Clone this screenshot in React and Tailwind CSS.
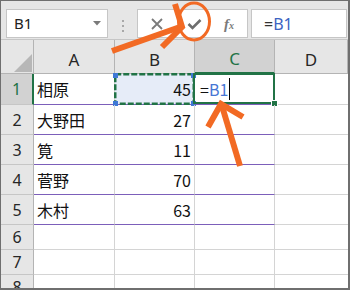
const rows = [
  { n: 1, a: "相原", b: "45", h: "h-[31px]" },
  { n: 2, a: "大野田", b: "27", h: "h-[30px]" },
  { n: 3, a: "筧", b: "11", h: "h-[30px]" },
  { n: 4, a: "菅野", b: "70", h: "h-[30px]" },
  { n: 5, a: "木村", b: "63", h: "h-[30px]" },
  { n: 6, h: "h-[25px]" },
  { n: 7, h: "h-[25px]" },
  { n: 8, h: "h-[25px]" },
];

function Toolbar() {
  return (
    <div className="h-[39px] bg-[#e6e6e6] border-b border-[#c6c6c6] flex items-start pt-[8px] pl-[5px] pr-px">
      <div className="w-[102px] h-[29px] bg-white border border-[#c6c6c6] flex items-center justify-between pl-[7px] pr-[6px]">
        <span className="font-['Noto_Sans',sans-serif] text-[15px] text-[#222] leading-none">B1</span>
        <svg width="8" height="5" viewBox="0 0 8 5">
          <polygon points="0,0 8,0 4,4.5" fill="#7a7a7a" />
        </svg>
      </div>
      <div className="ml-[14px] mt-[11px] flex flex-col gap-[3px]">
        <div className="w-[2px] h-[2px] bg-[#a8a8a8]" />
        <div className="w-[2px] h-[2px] bg-[#a8a8a8]" />
        <div className="w-[2px] h-[2px] bg-[#a8a8a8]" />
      </div>
      <div className="ml-[13px] w-[111px] h-[29px] bg-white border border-[#c6c6c6] flex items-center">
        <svg className="ml-[13px]" width="12" height="12" viewBox="0 0 12 12">
          <path d="M1 1 L11 11 M11 1 L1 11" stroke="#7a7a7a" strokeWidth="1.8" />
        </svg>
        <svg className="ml-[24px]" width="15" height="12" viewBox="0 0 15 12">
          <path d="M1.5 6 L5.5 10 L13.5 2" stroke="#6e6e6e" strokeWidth="2.6" fill="none" />
        </svg>
        <span className="ml-[22px] font-['Liberation_Serif',serif] italic text-[#7a7a7a] leading-none">
          <span className="text-[15px] font-bold">f</span>
          <span className="text-[10px] font-bold">x</span>
        </span>
      </div>
      <div className="ml-[3px] flex-1 h-[29px] bg-white border border-[#c6c6c6] flex items-center pl-[12px]">
        <span className="font-['Noto_Sans',sans-serif] text-[16px] leading-none">
          <span className="text-[#333]">=</span>
          <span className="text-[#3c63c2]">B1</span>
        </span>
      </div>
    </div>
  );
}

function HeaderRow() {
  const base =
    "h-[34px] bg-[#e6e6e6] border-r border-b border-[#b4b4b4] flex items-center justify-center pt-[6px] font-['Noto_Sans',sans-serif] text-[17px] text-[#262626]";
  return (
    <div className="grid grid-cols-[33px_81px_80px_80px_1fr]">
      <div className="h-[34px] bg-[#e6e6e6] border-r border-b border-[#b4b4b4] flex items-end justify-end pr-px pb-px">
        <svg width="18" height="18" viewBox="0 0 18 18">
          <polygon points="18,0 18,18 0,18" fill="#b7b7b7" />
        </svg>
      </div>
      <div className={base}>A</div>
      <div className={base}>B</div>
      <div className="h-[34px] bg-[#d2d2d2] border-r border-[#b4b4b4] border-b-2 border-b-[#217346] flex items-center justify-center pt-[5px] font-['Noto_Sans',sans-serif] text-[17px] text-[#217346]">
        C
      </div>
      <div className={base}>D</div>
    </div>
  );
}

function BodyRow({ r }) {
  const purple = r.n <= 5;
  const lineB = purple ? "border-b-[#7c5fba]" : "border-b-[#d4d4d4]";
  const cell = `relative border-r border-[#d4d4d4] border-b ${lineB}`;
  const isOne = r.n === 1;
  return (
    <div className={`grid grid-cols-[33px_81px_80px_80px_1fr] ${r.h}`}>
      <div
        className={
          isOne
            ? "bg-[#d2d2d2] border-b border-[#c6c6c6] border-r-2 border-r-[#217346] flex items-center justify-center font-['Noto_Sans',sans-serif] text-[16px] text-[#217346]"
            : "bg-[#e6e6e6] border-b border-[#c6c6c6] border-r border-r-[#b4b4b4] flex items-center justify-center font-['Noto_Sans',sans-serif] text-[16px] text-[#262626]"
        }
      >
        {r.n}
      </div>
      <div className={`${cell} flex items-center pl-[3px] font-['Noto_Sans_CJK_JP',sans-serif] text-[16px] text-[#111]`}>
        {r.a}
      </div>
      <div
        className={`${cell} ${isOne ? "bg-[#e6ecf8]" : ""} flex items-center justify-end pr-[3px] font-['Noto_Sans_CJK_JP',sans-serif] text-[16px] text-[#111]`}
      >
        {r.b}
        {isOne && (
          <>
            <svg className="absolute left-[-1px] top-[-1px]" width="81" height="32" viewBox="0 0 81 32">
              <rect x="1.25" y="1.25" width="78.5" height="29.5" fill="none" stroke="#217346" strokeWidth="2.5" strokeDasharray="6 2" />
            </svg>
            <div className="absolute left-[-2px] top-[-1px] w-[5px] h-[5px] bg-[#3f78d6]" />
            <div className="absolute left-[-2px] bottom-[-2px] w-[5px] h-[5px] bg-[#3f78d6]" />
            <div className="absolute right-[-2px] top-[-1px] w-[5px] h-[5px] bg-[#3f78d6]" />
            <div className="absolute right-[-2px] bottom-[-2px] w-[5px] h-[5px] bg-[#3f78d6]" />
          </>
        )}
      </div>
      <div className={`${cell} flex items-center pl-[5px] font-['Noto_Sans_CJK_JP',sans-serif] text-[16px]`}>
        {isOne && (
          <>
            <span className="text-[#111]">=</span>
            <span className="text-[#4676d4]">B1</span>
            <span className="ml-px w-px h-[22px] bg-black" />
            <div className="absolute left-[-2px] top-[-1px] right-[-1px] bottom-0 border-2 border-[#217346]" />
            <div className="absolute right-[-3px] bottom-[-2px] w-[5px] h-[5px] bg-[#217346] outline outline-1 outline-white" />
          </>
        )}
      </div>
      <div className="border-b border-[#d4d4d4]" />
    </div>
  );
}

export default function App() {
  return (
    <div className="relative w-[350px] h-[290px] overflow-hidden bg-white border-t border-l border-r-2 border-b-2 border-[#6f6f6f]">
      <Toolbar />
      <HeaderRow />
      {rows.map((r) => (
        <BodyRow key={r.n} r={r} />
      ))}
      <svg
        className="absolute left-[-1px] top-[-1px] pointer-events-none"
        width="350"
        height="290"
        viewBox="0 0 350 290"
      >
        <ellipse cx="194" cy="21.5" rx="15.5" ry="18.5" fill="none" stroke="#f26a24" strokeWidth="3" />
        <path d="M112 51 L180 27" stroke="#f26a24" strokeWidth="6" fill="none" />
        <path d="M175 4 L182 27 L162 47" stroke="#f26a24" strokeWidth="6" fill="none" strokeLinejoin="miter" />
        <path d="M240 166 L222 106" stroke="#f26a24" strokeWidth="6" fill="none" />
        <path d="M208 127 L221 104 L243 117" stroke="#f26a24" strokeWidth="6" fill="none" strokeLinejoin="miter" />
      </svg>
    </div>
  );
}
